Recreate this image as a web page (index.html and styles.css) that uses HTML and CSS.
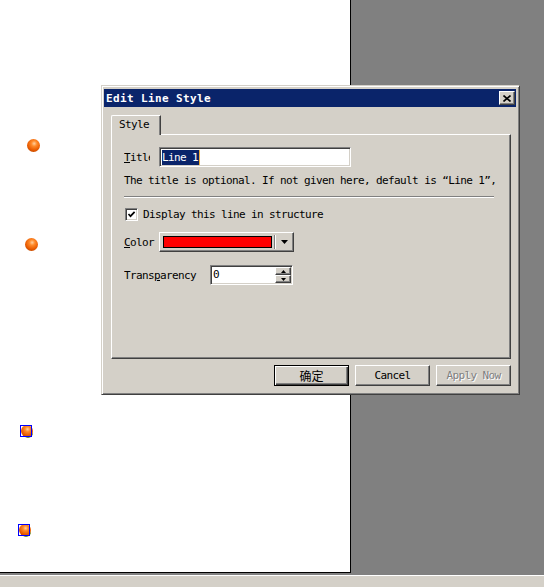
FILE: index.html
```html
<!DOCTYPE html>
<html>
<head>
<meta charset="utf-8">
<link rel="stylesheet" href="styles.css">
</head>
<body>
<div class="workspace">
  <div class="canvas">
    <span class="ball ball-1"></span>
    <span class="ball ball-2"></span>
    <span class="ball ball-3"></span>
    <span class="sel sel-1"></span>
    <span class="ball ball-4"></span>
    <span class="sel sel-2"></span>
  </div>
</div>

<div class="dialog">
  <div class="titlebar">
    <span class="title">Edit Line Style</span>
    <span class="close"><svg width="8" height="7" viewBox="0 0 8 7"><path d="M0.5 0.5 L7.5 6.5 M7.5 0.5 L0.5 6.5" stroke="#000" stroke-width="1.6"/></svg></span>
  </div>
  <div class="body">
    <div class="tabs"><span class="tab">Style</span></div>
    <div class="panel">
      <div class="row row-title">
        <span class="label label-clip"><u>T</u>itle</span>
        <span class="field field-title"><span class="selected">Line 1</span><span class="caret"></span></span>
      </div>
      <div class="desc">The title is optional. If not given here, default is “Line 1”,</div>
      <div class="sep"></div>
      <div class="row row-check">
        <span class="checkbox"><svg width="9" height="9" viewBox="0 0 9 9"><polyline points="1.5,4 3.5,6.2 7.6,1.8" fill="none" stroke="#000" stroke-width="1.7"/></svg></span>
        <span class="check-label">Display this line in structure</span>
      </div>
      <div class="row row-color">
        <span class="label"><u>C</u>olor</span>
        <span class="colorbtn">
          <span class="swatch"></span>
          <span class="vsep"></span>
          <svg class="arrow" width="7" height="4" viewBox="0 0 7 4"><path d="M0 0 H7 L3.5 4 Z" fill="#000"/></svg>
        </span>
      </div>
      <div class="row row-trans">
        <span class="label label-wide">Trans<u>p</u>arency</span>
        <span class="field field-spin">
          <span class="spin-value">0</span>
          <span class="spin">
            <span class="spin-btn"><svg width="5" height="3" viewBox="0 0 5 3"><path d="M0 3 H5 L2.5 0 Z" fill="#000"/></svg></span>
            <span class="spin-btn"><svg width="5" height="3" viewBox="0 0 5 3"><path d="M0 0 H5 L2.5 3 Z" fill="#000"/></svg></span>
          </span>
        </span>
      </div>
    </div>
    <div class="buttons">
      <span class="btn btn-default cjk">确定</span>
      <span class="btn">Cancel</span>
      <span class="btn btn-disabled">Apply Now</span>
    </div>
  </div>
</div>
</body>
</html>
```
FILE: styles.css
```css
* { box-sizing: border-box; }
html, body { margin: 0; padding: 0; }
body {
  width: 544px;
  height: 587px;
  overflow: hidden;
  position: relative;
  background: #d4d0c8;
  font-family: "DejaVu Sans Mono", "Noto Sans CJK SC", monospace;
  font-size: 11px;
  letter-spacing: -0.62px;
  color: #000;
}

.workspace {
  height: 576px;
  background: #808080;
  border-bottom: 1px solid #fff;
}
.canvas {
  position: relative;
  width: 351px;
  height: 573px;
  background: #fff;
  border-right: 1px solid #000;
  border-bottom: 1px solid #000;
}

.ball {
  position: absolute;
  width: 13px;
  height: 13px;
  border-radius: 50%;
  background: radial-gradient(circle at 55% 35%, #ffd0a0 0, #ff8a2a 25%, #e85a00 60%, #9a3a00 100%);
}
.ball-1 { left: 27px; top: 139px; }
.ball-2 { left: 25px; top: 238px; }
.ball-3 { left: 21px; top: 425px; width: 12px; height: 12px; box-shadow: 1px 2px 0 -1px #6a8a20; }
.ball-4 { left: 19px; top: 524px; width: 12px; height: 12px; box-shadow: 1px 2px 0 -1px #6a8a20; }
.sel {
  position: absolute;
  width: 12px;
  height: 12px;
  border: 1px solid #0000ff;
}
.sel-1 { left: 20px; top: 425px; }
.sel-2 { left: 18px; top: 524px; }

.dialog {
  position: absolute;
  left: 101px;
  top: 85px;
  width: 419px;
  height: 310px;
  background: #d4d0c8;
  border: 1px solid;
  border-color: #d4d0c8 #404040 #404040 #d4d0c8;
  box-shadow: inset 1px 1px #fff, inset -1px -1px #808080;
  padding: 3px 3px 2px 2px;
  display: flex;
  flex-direction: column;
}

.titlebar {
  height: 18px;
  flex: none;
  display: flex;
  align-items: center;
  justify-content: space-between;
  padding: 0 1px 0 2px;
  background: #0a246a;
  color: #fff;
}
.title {
  font-weight: bold;
  letter-spacing: 0.38px;
}
.close {
  width: 16px;
  height: 14px;
  display: flex;
  align-items: center;
  justify-content: center;
  background: #d4d0c8;
  border: 1px solid;
  border-color: #fff #404040 #404040 #fff;
  box-shadow: inset -1px -1px #808080;
}

.body {
  flex: 1;
  display: flex;
  flex-direction: column;
  padding: 8px 5px 0 7px;
}

.tabs {
  display: flex;
  height: 19px;
  position: relative;
  z-index: 1;
}
.tab {
  width: 50px;
  height: 20px;
  padding: 0 0 1px 7px;
  line-height: 18px;
  background: #d4d0c8;
  border-top: 1px solid #fff;
  border-left: 1px solid #fff;
  border-right: 1px solid #404040;
  box-shadow: inset -1px 0 #808080;
  border-top-left-radius: 2px;
}

.panel {
  width: 400px;
  height: 225px;
  border: 1px solid;
  border-color: #fff #404040 #404040 #fff;
  box-shadow: inset -1px -1px #808080;
  padding: 12px 0 0 12px;
}

.row {
  display: flex;
  align-items: center;
}
.label {
  width: 35px;
  flex: none;
  white-space: nowrap;
  overflow: hidden;
}
.label-clip {
  width: 26px;
  margin-right: 9px;
}
.label-wide { width: 86px; }

.field {
  background: #fff;
  border: 1px solid;
  border-color: #808080 #fff #fff #808080;
  box-shadow: inset 1px 1px #404040, inset -1px -1px #d4d0c8;
  display: flex;
  align-items: center;
}
.row-title { height: 20px; }
.field-title {
  width: 192px;
  height: 20px;
  padding: 0 2px;
}
.selected {
  background: #0a246a;
  color: #fff;
  line-height: 15px;
  padding-right: 1px;
}
.caret {
  width: 1px;
  height: 15px;
  background: #f0b040;
}

.desc {
  margin-top: 8px;
  line-height: 12px;
  white-space: nowrap;
}

.sep {
  margin-top: 9px;
  width: 370px;
  height: 2px;
  border-top: 1px solid #808080;
  border-bottom: 1px solid #fff;
}

.row-check {
  margin-top: 10px;
  height: 13px;
}
.checkbox {
  width: 13px;
  height: 13px;
  margin-left: 1px;
  background: #fff;
  border: 1px solid;
  border-color: #808080 #fff #fff #808080;
  box-shadow: inset 1px 1px #404040, inset -1px -1px #d4d0c8;
  display: flex;
  align-items: center;
  justify-content: center;
}
.check-label { margin-left: 5px; }

.row-color {
  margin-top: 11px;
  height: 20px;
}
.colorbtn {
  width: 135px;
  height: 20px;
  border: 1px solid;
  border-color: #fff #404040 #404040 #fff;
  box-shadow: inset -1px -1px #808080;
  display: flex;
  align-items: center;
  padding-left: 3px;
}
.swatch {
  width: 109px;
  height: 12px;
  background: #ff0000;
  border: 1px solid #000;
}
.vsep {
  width: 2px;
  height: 14px;
  margin-left: 2px;
  border-left: 1px solid #808080;
  border-right: 1px solid #fff;
}
.arrow { margin-left: 5px; }

.row-trans {
  margin-top: 13px;
  height: 20px;
}
.field-spin {
  width: 83px;
  height: 20px;
  padding: 2px 1px 2px 2px;
  justify-content: space-between;
}
.spin-value { line-height: 14px; }
.spin {
  display: flex;
  flex-direction: column;
  width: 16px;
  height: 16px;
}
.spin-btn {
  height: 8px;
  display: flex;
  align-items: center;
  justify-content: center;
  background: #d4d0c8;
  border: 1px solid;
  border-color: #fff #404040 #404040 #fff;
  box-shadow: inset -1px -1px #808080;
}

.buttons {
  margin-top: 6px;
  display: flex;
  justify-content: flex-end;
  gap: 6px;
  width: 400px;
}
.btn {
  width: 75px;
  height: 21px;
  display: flex;
  align-items: center;
  justify-content: center;
  background: #d4d0c8;
  border: 1px solid;
  border-color: #fff #404040 #404040 #fff;
  box-shadow: inset -1px -1px #808080;
}
.btn-default {
  border-color: #000;
  box-shadow: inset 1px 1px #fff, inset -1px -1px #404040, inset -2px -2px #808080;
}
.cjk {
  font-family: "Noto Sans CJK SC", sans-serif;
  font-size: 12px;
  letter-spacing: 0;
}
.btn-disabled {
  color: #808080;
  text-shadow: 1px 1px #fff;
}
```
